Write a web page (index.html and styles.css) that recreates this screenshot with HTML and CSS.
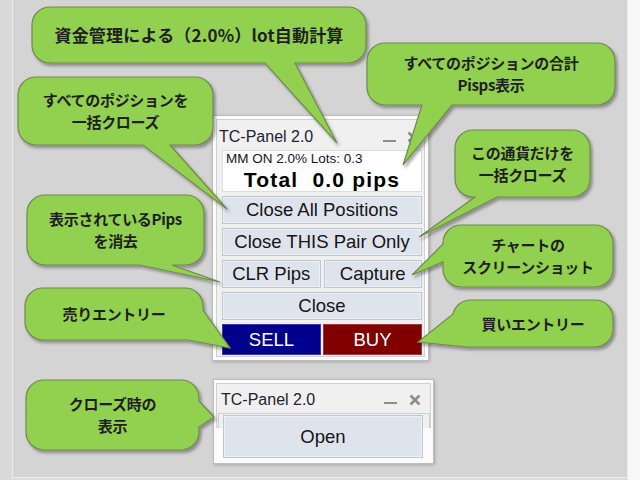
FILE: index.html
```html
<!DOCTYPE html>
<html lang="ja">
<head>
<meta charset="utf-8">
<title>TC-Panel 2.0</title>
<link rel="stylesheet" href="styles.css">
</head>
<body>
<div class="page">
  <div class="stage"></div>
  <div class="strip"></div>

  <section class="window window--main">
    <div class="frame">
      <header class="titlebar titlebar--main">
        <span class="title">TC-Panel 2.0</span>
        <svg class="ctrls" width="37" height="12" viewBox="0 0 37 12"><rect x="0" y="9" width="13" height="2" fill="#8c8c8c"/><path d="M25.5 1.5 L34.5 10.5 M34.5 1.5 L25.5 10.5" stroke="#8c8c8c" stroke-width="2.6"/></svg>
      </header>
      <div class="body">
        <div class="info">
          <div class="mm">MM ON 2.0% Lots: 0.3</div>
          <div class="total">Total&nbsp; 0.0 pips</div>
        </div>
        <button class="btn">Close All Positions</button>
        <button class="btn">Close THIS Pair Only</button>
        <div class="pair">
          <button class="btn">CLR Pips</button>
          <button class="btn">Capture</button>
        </div>
        <button class="btn">Close</button>
        <div class="pair pair--trade">
          <button class="btn btn--sell">SELL</button>
          <button class="btn btn--buy">BUY</button>
        </div>
      </div>
    </div>
  </section>

  <section class="window window--mini">
    <div class="frame frame--mini">
      <header class="titlebar titlebar--mini">
        <span class="title">TC-Panel 2.0</span>
        <svg class="ctrls" width="37" height="12" viewBox="0 0 37 12"><rect x="0" y="8" width="13" height="2" fill="#8c8c8c"/><path d="M26.5 1.5 L35.5 10.5 M35.5 1.5 L26.5 10.5" stroke="#8c8c8c" stroke-width="2.6"/></svg>
      </header>
      <div class="subframe"></div>
    </div>
    <button class="btn btn--open">Open</button>
  </section>

  <svg class="callouts" width="640" height="480" viewBox="0 0 640 480">
    <defs>
      <filter id="shadow" filterUnits="userSpaceOnUse" x="0" y="0" width="640" height="480">
        <feDropShadow dx="2" dy="2.5" stdDeviation="1.8" flood-color="#000" flood-opacity="0.35"/>
      </filter>
    </defs>
    <g fill="#92d050" stroke="#72894f" stroke-width="1.2" filter="url(#shadow)">
      <path d="M50,7 H348 A18,18 0 0 1 366,25 V45 A18,18 0 0 1 348,63 H295 L337,143 L265,63 H50 A18,18 0 0 1 32,45 V25 A18,18 0 0 1 50,7 Z"/>
      <path d="M385,43 H597 A18,18 0 0 1 615,61 V87 A18,18 0 0 1 597,105 H452 L403,165 L422,105 H385 A18,18 0 0 1 367,87 V61 A18,18 0 0 1 385,43 Z"/>
      <path d="M36,77 H195 A18,18 0 0 1 213,95 V127 A18,18 0 0 1 195,145 H170 L227,209 L143,145 H36 A18,18 0 0 1 18,127 V95 A18,18 0 0 1 36,77 Z"/>
      <path d="M473,130 H572 A18,18 0 0 1 590,148 V179 A18,18 0 0 1 572,197 H497 L419,237 L475,197 H473 A18,18 0 0 1 455,179 V148 A18,18 0 0 1 473,130 Z"/>
      <path d="M45,195 H186 A18,18 0 0 1 204,213 V247 A18,18 0 0 1 186,265 H172 L220,282 L140,265 H45 A18,18 0 0 1 27,247 V213 A18,18 0 0 1 45,195 Z"/>
      <path d="M461,225 H595 A18,18 0 0 1 613,243 V269 A18,18 0 0 1 595,287 H461 A18,18 0 0 1 443,269 V262 L412,275 L443,244 V243 A18,18 0 0 1 461,225 Z"/>
      <path d="M43,288 H185 A18,18 0 0 1 203,306 V310 L230,348 L188,340 H43 A18,18 0 0 1 25,322 V306 A18,18 0 0 1 43,288 Z"/>
      <path d="M471,300 H595 A18,18 0 0 1 613,318 V329 A18,18 0 0 1 595,347 H467 L418,342 L453,314 A18,18 0 0 1 471,300 Z"/>
      <path d="M44,380 H181 A18,18 0 0 1 199,398 V401 L214,417 L199,427 V432 A18,18 0 0 1 181,450 H44 A18,18 0 0 1 26,432 V398 A18,18 0 0 1 44,380 Z"/>
    </g>
  </svg>

  <div class="note note-1">資金管理による（2.0%）lot自動計算</div>
  <div class="note note-2">すべてのポジションの合計<br>Pisps表示</div>
  <div class="note note-3">すべてのポジションを<br>一括クローズ</div>
  <div class="note note-4">この通貨だけを<br>一括クローズ</div>
  <div class="note note-5">表示されているPips<br>を消去</div>
  <div class="note note-6">チャートの<br>スクリーンショット</div>
  <div class="note note-7">売りエントリー</div>
  <div class="note note-8">買いエントリー</div>
  <div class="note note-9">クローズ時の<br>表示</div>
</div>
</body>
</html>
```

FILE: styles.css
```css
* { box-sizing: border-box; }

body {
  margin: 0;
  font-family: "Liberation Sans", Arial, sans-serif;
}

.page {
  position: relative;
  width: 640px;
  height: 480px;
  display: flex;
  background: #dadada;
  overflow: hidden;
}

.stage {
  margin-left: 12px;
  width: 616px;
  height: 478px;
  background: #d4d4d4;
  border: 1px solid #ececec;
  border-top: 0;
}

.strip {
  flex: 1;
  background: #f8f8f8;
}

/* ---------- windows ---------- */
.window {
  position: absolute;
  background: #fbfbfb;
  border: 1px solid #bdbdbd;
  box-shadow: 1px 1px 3px rgba(0, 0, 0, 0.22);
}

.window--main {
  left: 212px;
  top: 115px;
  width: 217px;
  padding: 3px 3px 3px 3px;
}

.window--mini {
  left: 213px;
  top: 379px;
  width: 221px;
  padding: 3px 2px 5px 2px;
}

.frame {
  border: 1px solid #d0d0d0;
  background: #f0f0f0;
}

.frame--mini {
  height: 45px;
  border-bottom: 0;
}

.titlebar {
  display: flex;
  align-items: center;
  justify-content: space-between;
  padding-top: 3px;
}

.titlebar--main {
  height: 30px;
  padding-left: 2px;
  padding-right: 4px;
}

.titlebar--mini {
  height: 29px;
  padding-left: 4px;
  padding-right: 9px;
}

.title {
  font-size: 16px;
  line-height: 20px;
  color: #23232f;
}

.ctrls {
  display: block;
}

.subframe {
  height: 15px;
  margin-left: 1px;
  border: 1px solid #cfcfcf;
  border-bottom: 0;
}

.body {
  display: flex;
  flex-direction: column;
  gap: 4px;
  padding: 0 2px 1px 5px;
}

.info {
  height: 42px;
  background: #fefefe;
  border: 1px solid #dcdcdc;
  padding: 1px 3px 0;
}

.mm {
  font-size: 13.5px;
  line-height: 14px;
  color: #15152a;
}

.total {
  margin-top: 2px;
  text-align: center;
  font-size: 21px;
  line-height: 24px;
  font-weight: bold;
  letter-spacing: 1.2px;
  color: #000;
}

.btn {
  display: block;
  width: 100%;
  height: 28px;
  padding: 0;
  margin: 0;
  border: 1px solid #bcc7d5;
  background: #dfe4ec;
  box-shadow: inset 0 0 0 1px #ecf0f5;
  font-family: "Liberation Sans", Arial, sans-serif;
  font-size: 18.5px;
  line-height: 26px;
  color: #151515;
  text-align: center;
}

.pair {
  display: grid;
  grid-template-columns: 1fr 1fr;
  gap: 3px;
}

.pair--trade {
  gap: 2px;
}

.pair--trade .btn {
  height: 31px;
  line-height: 29px;
  color: #fff;
  box-shadow: none;
}

.btn--sell {
  background: #00008c;
  border-color: #3a3a9a;
}

.btn--buy {
  background: #800000;
  border-color: #9a3a3a;
}

.btn--open {
  width: 200px;
  height: 43px;
  margin: -13px 0 0 7px;
  line-height: 41px;
}

/* ---------- callouts ---------- */
.callouts {
  position: absolute;
  left: 0;
  top: 0;
}

.note {
  position: absolute;
  display: flex;
  align-items: center;
  justify-content: center;
  text-align: center;
  font-family: "Noto Sans CJK JP", "Noto Sans", sans-serif;
  font-weight: 700;
  font-size: 15px;
  line-height: 22px;
  letter-spacing: -0.3px;
  color: #1f1f1f;
}

.note-1 { left: 32px;  top: 7px;   width: 334px; height: 56px; font-size: 17px; letter-spacing: 0.2px; }
.note-2 { left: 367px; top: 43px;  width: 248px; height: 62px; }
.note-3 { left: 18px;  top: 77px;  width: 195px; height: 68px; }
.note-4 { left: 455px; top: 130px; width: 135px; height: 67px; }
.note-5 { left: 27px;  top: 195px; width: 177px; height: 70px; }
.note-6 { left: 443px; top: 225px; width: 170px; height: 62px; }
.note-7 { left: 25px;  top: 288px; width: 178px; height: 52px; }
.note-8 { left: 453px; top: 300px; width: 160px; height: 47px; }
.note-9 { left: 26px;  top: 380px; width: 173px; height: 70px; }
```
